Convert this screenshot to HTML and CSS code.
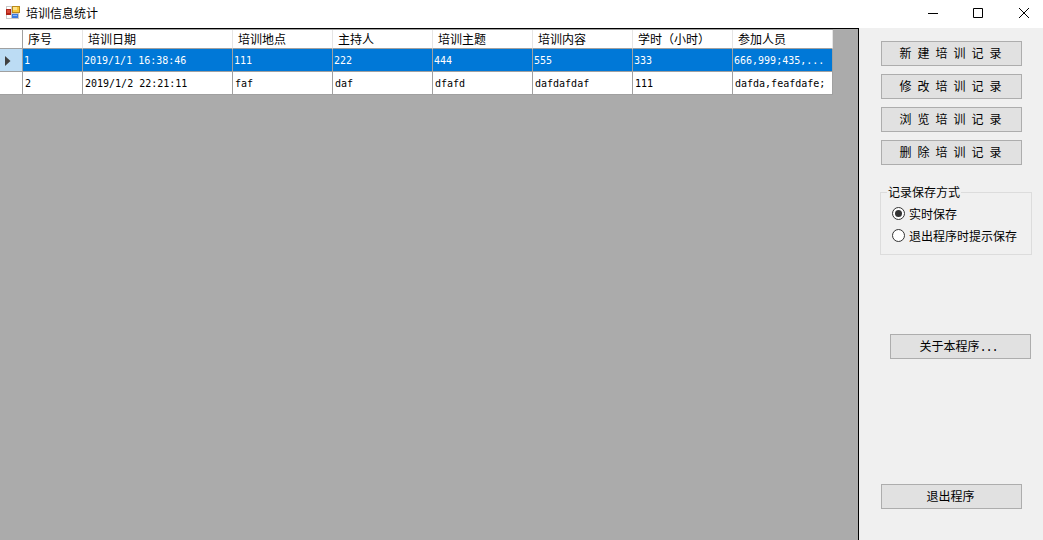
FILE: index.html
```html
<!DOCTYPE html>
<html lang="zh-CN">
<head>
<meta charset="utf-8">
<title>培训信息统计</title>
<link rel="stylesheet" href="styles.css">
</head>
<body>
<div class="window">
  <header class="titlebar">
    <svg class="app-icon" width="14" height="13" viewBox="0 0 14 13" shape-rendering="crispEdges">
      <path d="M0 0h6v13H0zM5 7h8v6H5z" fill="#c8c8c8"/>
      <path d="M1 1h4v2H1zM1 9h4v3H1z" fill="#fff"/>
      <path d="M0 3h5v6H0z" fill="#b02418"/><path d="M1 4h3v3H1z" fill="#d84838"/>
      <path d="M6 0h8v7H6z" fill="#b98a1c"/><path d="M7 1h6v5H7z" fill="#f8c83a"/><path d="M7 1h4v3H7z" fill="#ffe48a"/>
      <path d="M6 8h6v4H6z" fill="#3b7be0"/><path d="M7 9h4v1H7z" fill="#8ab8f8"/>
    </svg>
    <h1 class="title">培训信息统计</h1>
    <svg class="controls" width="103" height="12" viewBox="0 0 103 12" fill="none" stroke="#000">
      <path d="M0 6.5h10"/><path d="M45.5 1.5h9v9h-9z"/><path d="M91 1l10 10M101 1L91 11"/>
    </svg>
  </header>
  <main class="content">
    <section class="grid-panel">
      <div class="grid">
        <div class="row head"><span class="mark"></span><span>序号</span><span>培训日期</span><span>培训地点</span><span>主持人</span><span>培训主题</span><span>培训内容</span><span>学时（小时）</span><span>参加人员</span></div>
        <div class="row selected"><span class="mark"><svg width="6" height="10" viewBox="0 0 6 10"><path d="M0 0l5.5 5L0 10z" fill="#404040"/></svg></span><span>1</span><span>2019/1/1 16:38:46</span><span>111</span><span>222</span><span>444</span><span>555</span><span>333</span><span>666,999;435,...</span></div>
        <div class="row"><span class="mark"></span><span>2</span><span>2019/1/2 22:21:11</span><span>faf</span><span>daf</span><span>dfafd</span><span>dafdafdaf</span><span>111</span><span>dafda,feafdafe;</span></div>
      </div>
    </section>
    <aside class="side">
      <div class="actions">
        <button class="btn spaced">新建培训记录</button>
        <button class="btn spaced">修改培训记录</button>
        <button class="btn spaced">浏览培训记录</button>
        <button class="btn spaced">删除培训记录</button>
      </div>
      <fieldset class="group">
        <legend>记录保存方式</legend>
        <label class="option"><svg class="radio" width="13" height="13" viewBox="0 0 13 13"><circle cx="6.5" cy="6.5" r="6" fill="#fff" stroke="#333"/><circle cx="6.5" cy="6.5" r="3.5" fill="#333"/></svg>实时保存</label>
        <label class="option"><svg class="radio" width="13" height="13" viewBox="0 0 13 13"><circle cx="6.5" cy="6.5" r="6" fill="#fff" stroke="#333"/></svg>退出程序时提示保存</label>
      </fieldset>
      <button class="btn about">关于本程序<span class="dots">...</span></button>
      <button class="btn exit">退出程序</button>
    </aside>
  </main>
</div>
</body>
</html>
```
FILE: styles.css
```css
* { box-sizing: border-box; }
body {
  margin: 0;
  font: 12px/16px "Noto Sans CJK SC", sans-serif;
  color: #000;
}
.window {
  display: flex;
  flex-direction: column;
  width: 1043px;
  height: 540px;
  background: #f0f0f0;
  overflow: hidden;
}
.titlebar {
  display: flex;
  align-items: center;
  flex: none;
  height: 28px;
  padding: 0 12px 3px 6px;
  background: #fff;
}
.title { margin: 0 auto 0 6px; font-size: 12px; font-weight: 400; }
.content { display: flex; flex: 1; min-height: 0; }
.grid-panel {
  width: 859px;
  background: #ababab;
  border-top: 1px solid #000;
  border-right: 1px solid #000;
}
.grid { width: 833px; border-top: 1px solid #a0a0a0; }
.row {
  display: grid;
  grid-template-columns: 23px 60px 150px repeat(6, 100px);
  grid-template-rows: 100%;
  height: 23px;
  background: #fff;
  font: 10px/23px "DejaVu Sans Mono", monospace;
}
.row span {
  padding-left: 2px;
  border-right: 1px solid #a0a0a0;
  border-bottom: 1px solid #a0a0a0;
  white-space: nowrap;
}
.row.head {
  height: 19px;
  font: 12px/18px "Noto Sans CJK SC", sans-serif;
}
.row.head span { padding-left: 5px; border-right-color: #e5e5e5; }
.row.head .mark { border-right-color: #a0a0a0; }
.row.selected { color: #fff; }
.row.selected span { padding-left: 1px; background: #0078d7; }
.row.selected .mark {
  display: flex;
  align-items: center;
  padding: 2px 0 0 5px;
  background: #bcdcf4;
}
.side {
  display: flex;
  flex-direction: column;
  align-items: flex-start;
  flex: 1;
  padding: 13px 0 0 21px;
}
.actions { display: flex; flex-direction: column; gap: 8px; margin-left: 1px; }
.btn {
  width: 141px;
  height: 25px;
  padding: 0 2px 1px 0;
  background: #e1e1e1;
  border: 1px solid #adadad;
  font: 12px/16px "Noto Sans CJK SC", sans-serif;
  color: #000;
  white-space: nowrap;
}
.spaced { letter-spacing: 6px; padding: 0 0 1px 4px; }
.group {
  width: 152px;
  height: 71px;
  margin: 19px 0 0;
  padding: 2px 0 0 11px;
  border: 1px solid #dcdcdc;
}
.group legend { margin-left: -5px; padding: 0 1px; line-height: 16px; }
.option { display: flex; align-items: center; gap: 4px; height: 22px; padding-top: 1px; white-space: nowrap; }
.radio { margin-bottom: 1px; }
.about { margin: 79px 0 0 10px; padding: 0 4px 0 0; }
.dots { font-family: "Liberation Mono", monospace; letter-spacing: -1.2px; }
.exit { margin: 125px 0 0 1px; }
```
